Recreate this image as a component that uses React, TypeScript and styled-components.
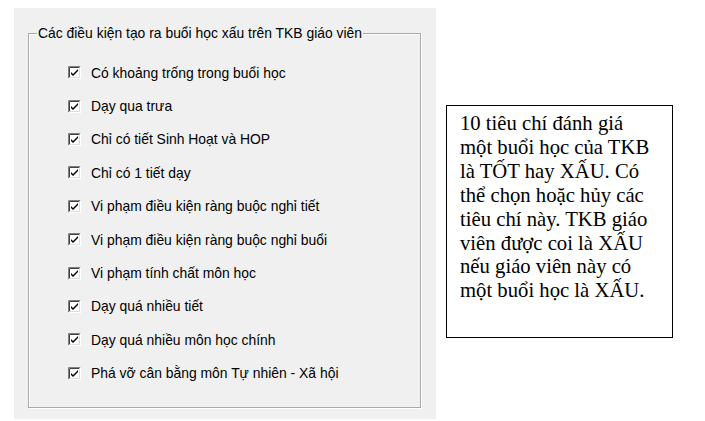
import React from 'react';
import styled, { createGlobalStyle } from 'styled-components';

const GlobalStyle = createGlobalStyle`
  html, body {
    margin: 0;
    padding: 0;
    background: #ffffff;
  }
`;

const Page = styled.div`
  display: flex;
  align-items: flex-start;
  width: 705px;
  height: 421px;
  padding: 8px 0 0 14px;
  box-sizing: border-box;
  gap: 10px;
`;

const Panel = styled.section`
  width: 422px;
  height: 411px;
  background: #f0f0f0;
  padding: 17px 0 0 14px;
  box-sizing: border-box;
`;

const GroupBox = styled.fieldset`
  width: 393px;
  height: 383px;
  margin: 0;
  padding: 15px 0 0 0;
  box-sizing: border-box;
  border: 1px solid #a9a9a9;
  border-radius: 0;
  box-shadow: inset 1px 1px 0 #ffffff, 1px 1px 0 #ffffff;
`;

const GroupTitle = styled.legend`
  margin-left: 8px;
  padding: 0 1px;
  background: #f0f0f0;
  font-family: 'Liberation Sans', Arial, sans-serif;
  font-size: 13.9px;
  color: #000;
`;

const CheckList = styled.div`
  display: flex;
  flex-direction: column;
  padding-left: 39px;
`;

const CheckRow = styled.label`
  display: flex;
  align-items: center;
  gap: 10px;
  height: 33.4px;
  font-family: 'Liberation Sans', Arial, sans-serif;
  font-size: 13.9px;
  color: #000;
`;

const InfoBox = styled.div`
  width: 227px;
  height: 233px;
  margin-top: 97px;
  border: 1px solid #000;
  box-sizing: border-box;
  padding: 6px 0 0 13px;
  background: #fff;
  font-family: 'Liberation Serif', 'Times New Roman', serif;
  font-size: 20.7px;
  line-height: 23.9px;
  color: #000;
  white-space: nowrap;
`;

const CheckIcon = () => (
  <svg width="13" height="13" viewBox="0 0 13 13">
    <rect x="0" y="0" width="13" height="13" fill="#ffffff" />
    <path d="M0.5 12.5 V0.5 H12.5" stroke="#808080" fill="none" />
    <path d="M1.5 11.5 V1.5 H11.5" stroke="#404040" fill="none" />
    <path d="M0.5 12.5 H12.5 V0.5" stroke="#ffffff" fill="none" />
    <path d="M1.5 11.5 H11.5 V1.5" stroke="#dcdcdc" fill="none" />
    <path d="M3 6 L5 8 L10 3 V5 L5 10 L3 8 Z" fill="#000000" />
  </svg>
);

const criteria = [
  'Có khoảng trống trong buổi học',
  'Dạy qua trưa',
  'Chỉ có tiết Sinh Hoạt và HOP',
  'Chỉ có 1 tiết dạy',
  'Vi phạm điều kiện ràng buộc nghỉ tiết',
  'Vi phạm điều kiện ràng buộc nghỉ buổi',
  'Vi phạm tính chất môn học',
  'Dạy quá nhiều tiết',
  'Dạy quá nhiều môn học chính',
  'Phá vỡ cân bằng môn Tự nhiên - Xã hội',
];

const infoLines = [
  '10 tiêu chí đánh giá',
  'một buổi học của TKB',
  'là TỐT hay XẤU. Có',
  'thể chọn hoặc hủy các',
  'tiêu chí này. TKB giáo',
  'viên được coi là XẤU',
  'nếu giáo viên này có',
  'một buổi học là XẤU.',
];

const App = () => {
  return (
    <>
      <GlobalStyle />
      <Page>
        <Panel>
          <GroupBox>
            <GroupTitle>Các điều kiện tạo ra buổi học xấu trên TKB giáo viên</GroupTitle>
            <CheckList>
              {criteria.map((item) => (
                <CheckRow key={item}>
                  <CheckIcon />
                  {item}
                </CheckRow>
              ))}
            </CheckList>
          </GroupBox>
        </Panel>
        <InfoBox>
          {infoLines.map((line) => (
            <div key={line}>{line}</div>
          ))}
        </InfoBox>
      </Page>
    </>
  );
};

export default App;
